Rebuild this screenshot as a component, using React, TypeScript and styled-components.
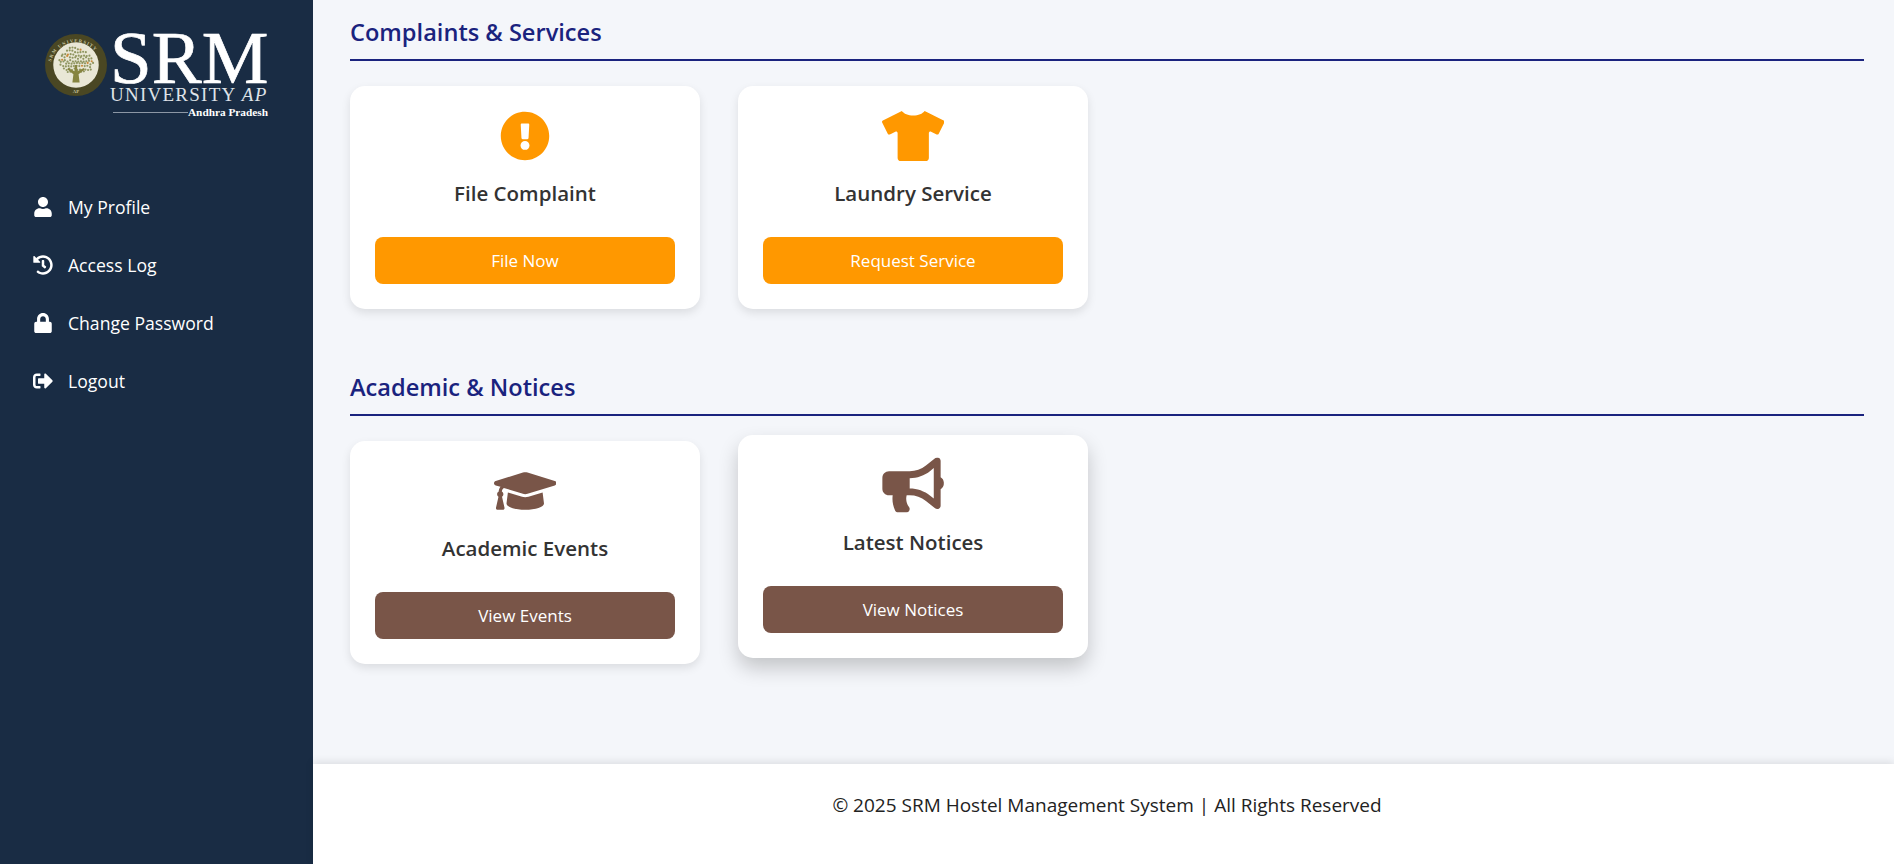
import styled, { createGlobalStyle } from "styled-components";
import {
  FaBullhorn,
  FaExclamationCircle,
  FaGraduationCap,
  FaHistory,
  FaLock,
  FaSignOutAlt,
  FaTshirt,
  FaUser,
} from "react-icons/fa";

const GlobalStyle = createGlobalStyle`
  * { box-sizing: border-box; }
  html, body { margin: 0; padding: 0; height: 100%; overflow: hidden; }
  body { font-family: "Open Sans", "Noto Sans", sans-serif; background: #f4f6fa; }
`;

const navItems = [
  { label: "My Profile", icon: <FaUser /> },
  { label: "Access Log", icon: <FaHistory /> },
  { label: "Change Password", icon: <FaLock /> },
  { label: "Logout", icon: <FaSignOutAlt /> },
];

const sections = [
  {
    title: "Complaints & Services",
    color: "#ff9800",
    cards: [
      { title: "File Complaint", action: "File Now", icon: <FaExclamationCircle />, iconWidth: 50 },
      { title: "Laundry Service", action: "Request Service", icon: <FaTshirt />, iconWidth: 62.5 },
    ],
  },
  {
    title: "Academic & Notices",
    color: "#795548",
    cards: [
      { title: "Academic Events", action: "View Events", icon: <FaGraduationCap />, iconWidth: 62.5 },
      { title: "Latest Notices", action: "View Notices", icon: <FaBullhorn />, iconWidth: 56.25, hovered: true },
    ],
  },
];

// crown of the seal's tree: small dots on a rough dome
const leaves: number[][] = [];
for (let row = 0; row < 9; row++) {
  const half = [6, 10, 13, 15, 16, 16, 15, 13, 8][row];
  for (let x = -half; x <= half; x += 2.6) {
    const jitter = ((row * 7 + Math.round(x) * 3) % 5) * 0.35;
    leaves.push([30 + x + (row % 2) * 1.3, 14.5 + row * 2.7 + jitter]);
  }
}

const Seal = () => (
  <svg width="62" height="62" viewBox="0 0 60 60" aria-hidden="true">
    <circle cx="30" cy="30" r="30" fill="#4a4723" />
    <circle cx="30" cy="30" r="22" fill="#e9e7d6" />
    <defs>
      <path id="sealArc" d="M5 33a25 25 0 1 1 50 0" />
    </defs>
    <text fontFamily="Liberation Serif, serif" fontSize="4.6" fontWeight="700" fill="#c9c6a0" letterSpacing="1">
      <textPath href="#sealArc" startOffset="8%">
        SRM UNIVERSITY
      </textPath>
    </text>
    <text x="30" y="57" textAnchor="middle" fontFamily="Liberation Serif, serif" fontSize="4.6" fontWeight="700" fill="#c9c6a0">
      AP
    </text>
    {leaves.map(([x, y], i) => (
      <circle key={i} cx={x} cy={y} r="1.05" fill={i % 11 === 4 ? "#c98a3c" : "#8f9560"} />
    ))}
    <path d="M26.5 47l1-8-6-5 1-1 6 3 .6-6h1.8l.6 6 6-3 1 1-6 5 1 8z" fill="#86843f" />
  </svg>
);

const App = () => (
  <Page>
    <GlobalStyle />
    <Sidebar>
      <Logo>
        <Seal />
        <Wordmark>
          <Srm>SRM</Srm>
          <University>
            UNIVERSITY <em>AP</em>
          </University>
          <Region>
            <RegionLine />
            Andhra Pradesh
          </Region>
        </Wordmark>
      </Logo>
      <Nav>
        {navItems.map((item) => (
          <NavLink key={item.label} href="#">
            <NavIcon>{item.icon}</NavIcon>
            {item.label}
          </NavLink>
        ))}
      </Nav>
    </Sidebar>
    <Content>
      <Main>
        {sections.map((section) => (
          <Section key={section.title}>
            <SectionTitle>{section.title}</SectionTitle>
            <CardRow>
              {section.cards.map((card) => (
                <Card key={card.title} $hovered={card.hovered}>
                  <CardIcon $color={section.color} $width={card.iconWidth} $hovered={card.hovered}>
                    {card.icon}
                  </CardIcon>
                  <CardTitle>{card.title}</CardTitle>
                  <ActionButton $color={section.color}>{card.action}</ActionButton>
                </Card>
              ))}
            </CardRow>
          </Section>
        ))}
      </Main>
      <Footer>© 2025 SRM Hostel Management System | All Rights Reserved</Footer>
    </Content>
  </Page>
);

const Page = styled.div`
  display: flex;
  height: 100vh;
`;

const Sidebar = styled.aside`
  width: 313px;
  flex: none;
  background: #192c44;
  color: #fff;
`;

const Logo = styled.div`
  display: flex;
  align-items: flex-start;
  gap: 3px;
  padding: 31px 0 0 45px;
  height: 178px;
  svg {
    flex: none;
    margin-top: 3px;
  }
`;

const Wordmark = styled.div`
  width: 158px;
  font-family: "Liberation Serif", serif;
  color: #fff;
`;

const Srm = styled.div`
  font-size: 75px;
  line-height: 54px;
  height: 54px;
  -webkit-text-stroke: 0.7px #fff;
`;

const University = styled.div`
  font-size: 19px;
  line-height: 19px;
  letter-spacing: 1.25px;
  white-space: nowrap;
  color: #dfe3e8;
`;

const Region = styled.div`
  display: flex;
  align-items: center;
  justify-content: flex-end;
  margin-top: 2px;
  font-size: 11.3px;
  line-height: 12px;
  font-weight: 700;
  white-space: nowrap;
`;

const RegionLine = styled.span`
  flex: 1;
  height: 1px;
  margin-left: 3px;
  background: #8c97a5;
`;

const Nav = styled.nav`
  display: flex;
  flex-direction: column;
`;

const NavLink = styled.a`
  display: flex;
  align-items: center;
  height: 58px;
  padding-left: 33px;
  color: #fff;
  font-size: 17.6px;
  text-decoration: none;
`;

const NavIcon = styled.span`
  display: flex;
  justify-content: center;
  width: 20px;
  margin-right: 15px;
  font-size: 20px;
`;

const Content = styled.div`
  flex: 1;
  display: flex;
  flex-direction: column;
  min-width: 0;
`;

const Main = styled.main`
  flex: 1;
  padding: 16px 30px 0 37px;
`;

const Section = styled.section`
  margin-bottom: 62px;
`;

const SectionTitle = styled.h2`
  margin: 0 0 25px;
  padding-bottom: 10px;
  border-bottom: 2px solid #1a237e;
  color: #1a237e;
  font-size: 23.6px;
  line-height: 33px;
  font-weight: 600;
`;

const CardRow = styled.div`
  display: flex;
  gap: 38px;
`;

const Card = styled.div<{ $hovered?: boolean }>`
  width: 350px;
  height: 223px;
  padding: 25px;
  background: #fff;
  border-radius: 15px;
  text-align: center;
  box-shadow: ${(p) =>
    p.$hovered ? "0 10px 20px rgba(0, 0, 0, 0.2)" : "0 4px 10px rgba(0, 0, 0, 0.1)"};
  transform: ${(p) => (p.$hovered ? "translateY(-6px)" : "none")};
`;

const CardIcon = styled.div<{ $color: string; $width: number; $hovered?: boolean }>`
  display: flex;
  justify-content: center;
  height: 50px;
  color: ${(p) => p.$color};
  transform: ${(p) => (p.$hovered ? "scale(1.1)" : "none")};
  svg {
    flex: none;
    width: ${(p) => p.$width}px;
    height: 50px;
  }
`;

const CardTitle = styled.h3`
  margin: 18px 0 0;
  height: 58px;
  color: #333;
  font-size: 20.5px;
  line-height: 28px;
  font-weight: 600;
`;

const ActionButton = styled.button<{ $color: string }>`
  display: block;
  width: 300px;
  height: 47px;
  border: none;
  border-radius: 8px;
  background: ${(p) => p.$color};
  color: #fff;
  font-family: inherit;
  font-size: 17px;
`;

const Footer = styled.footer`
  height: 100px;
  flex: none;
  padding: 28px 0 0 7px;
  background: #fff;
  box-shadow: 0 -2px 8px rgba(0, 0, 0, 0.1);
  text-align: center;
  color: #222;
  font-size: 19px;
  line-height: 26px;
`;

export default App;
